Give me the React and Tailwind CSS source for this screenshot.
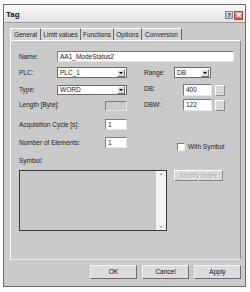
import React from "react";

const sunken =
  "border border-t-[#7c7c7c] border-l-[#7c7c7c] border-b-[#e6e6e6] border-r-[#e6e6e6]";

const TextBox = ({ value, className = "", disabled }) => (
  <div
    className={`${sunken} h-full flex items-center pl-[2px] ${
      disabled ? "bg-[#cbcbcb]" : "bg-white"
    } ${className}`}
  >
    {value}
  </div>
);

const Select = ({ value, className = "" }) => (
  <div
    className={`border border-[#6a6a6a] bg-white h-full flex items-center justify-between ${className}`}
  >
    <span className="pl-[2px]">{value}</span>
    <span className="w-[8px] h-[8px] mr-[1px] bg-[#dcdcdc] border border-t-white border-l-white border-b-[#777] border-r-[#777] flex items-center justify-center">
      <span className="block w-0 h-0 border-l-[2px] border-r-[2px] border-t-[2px] border-l-transparent border-r-transparent border-t-black" />
    </span>
  </div>
);

const DotsBtn = () => (
  <div className="ml-[3px] w-[10px] h-[11px] bg-[#d9d9d9] border border-t-white border-l-white border-b-[#8a8a8a] border-r-[#8a8a8a] flex items-end justify-center text-[#999] leading-[8px]">
    ...
  </div>
);

const Button = ({ label }) => (
  <div className="w-[47px] h-[14px] bg-[#dcdcdc] border border-t-[#f4f4f4] border-l-[#f4f4f4] border-b-[#6e6e6e] border-r-[#6e6e6e] flex items-center justify-center text-[#111]">
    {label}
  </div>
);

export default function App() {
  return (
    <div
      className="w-[250px] h-[292px] bg-white overflow-hidden text-[6.5px] text-[#222]"
      style={{ fontFamily: '"Liberation Sans", Arial, sans-serif' }}
    >
      <div className="ml-[3px] mt-[4px] w-[243px] h-[283px] border border-[#6c6c6c] flex flex-col">
        {/* title bar */}
        <div className="h-[18px] shrink-0 bg-gradient-to-b from-[#fbfbfb] to-[#e0e0e0] border-b border-[#9a9a9a] flex items-center justify-between pl-[2px] pr-[2px]">
          <span className="font-bold text-[8px] text-[#111] mt-[3px]">Tag</span>
          <div className="flex gap-[1px] mt-[3px]">
            <div className="w-[8px] h-[8px] bg-gradient-to-b from-[#dfe6f2] to-[#a9b6cc] border border-[#7585a0] flex items-center justify-center text-[6px] font-bold text-[#223] leading-none">
              ?
            </div>
            <div className="w-[9px] h-[9px] bg-gradient-to-b from-[#f4a6a0] to-[#d9534a] border border-[#a8433b] flex items-center justify-center">
              <svg width="6" height="6" viewBox="0 0 6 6">
                <path d="M1 1 L5 5 M5 1 L1 5" stroke="white" strokeWidth="1.3" />
              </svg>
            </div>
          </div>
        </div>

        {/* body */}
        <div className="flex-1 bg-[#cacaca] pt-[5px] pl-[6px] pr-[4px] flex flex-col">
          {/* tabs */}
          <div className="h-[12px] flex items-stretch">
            <div className="w-[31px] flex items-center justify-center border-t border-l border-white border-r border-r-[#666] bg-[#d4d4d4]">
              General
            </div>
            <div className="w-[40px] flex items-center justify-center border-t border-white border-r border-r-[#666] bg-[#d4d4d4]">
              Limit values
            </div>
            <div className="w-[33px] flex items-center justify-center border-t border-white border-r border-r-[#666] bg-[#d4d4d4]">
              Functions
            </div>
            <div className="w-[28px] flex items-center justify-center border-t border-white border-r border-r-[#666] bg-[#d4d4d4]">
              Options
            </div>
            <div className="w-[40px] flex items-center justify-center border-t border-white border-r border-r-[#666] bg-[#d4d4d4]">
              Conversion
            </div>
          </div>

          {/* panel */}
          <div className="h-[220px] border border-t-white border-l-white border-b-[#ececec] border-r-[#8f8f8f] pl-[8px] pt-[10px] flex flex-col">
            {/* Name */}
            <div className="h-[11px] flex items-center">
              <span className="w-[38px]">Name:</span>
              <TextBox value="AA1_ModeStatus2" className="w-[177px]" />
            </div>
            {/* PLC / Range */}
            <div className="h-[11px] mt-[5px] flex items-center">
              <span className="w-[38px]">PLC:</span>
              <Select value="PLC_1" className="w-[70px]" />
              <span className="w-[30px] ml-[17px]">Range:</span>
              <Select value="DB" className="w-[37px]" />
            </div>
            {/* Type / DB */}
            <div className="h-[12px] mt-[6px] flex items-center">
              <span className="w-[38px]">Type:</span>
              <div className="h-[10px] w-[70px]">
                <Select value="WORD" />
              </div>
              <span className="w-[39px] ml-[17px] self-start">DB:</span>
              <TextBox value="400" className="w-[29px]" />
              <DotsBtn />
            </div>
            {/* Length / DBW */}
            <div className="h-[12px] mt-[3px] flex items-end">
              <span className="w-[86px] mb-[1px]">Length [Byte]:</span>
              <div className="h-[10px] w-[22px]">
                <TextBox value="" disabled />
              </div>
              <span className="w-[39px] ml-[17px] self-center">DBW:</span>
              <TextBox value="122" className="w-[29px]" />
              <DotsBtn />
            </div>
            {/* Acquisition */}
            <div className="h-[11px] mt-[8px] flex items-center">
              <span className="w-[86px]">Acquisition Cycle [s]:</span>
              <TextBox value="1" className="w-[22px]" />
            </div>
            {/* Number of elements */}
            <div className="h-[11px] mt-[7px] flex items-center">
              <span className="w-[86px]">Number of Elements:</span>
              <TextBox value="1" className="w-[22px]" />
              <div className="ml-[50px] mt-[9px] flex items-center">
                <div className="w-[8px] h-[8px] bg-white border border-t-[#7c7c7c] border-l-[#7c7c7c] border-b-[#eee] border-r-[#eee]" />
                <span className="ml-[3px]">With Symbol</span>
              </div>
            </div>
            {/* Symbol label */}
            <div className="mt-[9px] h-[8px] flex items-center">Symbol:</div>
            {/* Symbol box + Modify index */}
            <div className="mt-[5px] flex items-start">
              <div className="w-[148px] h-[61px] border border-[#3a3a3a] bg-[#c8c8c8] flex justify-end">
                <div className="w-[10px] h-full bg-[#f3f3f3] flex flex-col justify-between items-center py-[2px]">
                  <span className="block w-0 h-0 border-l-[2px] border-r-[2px] border-b-[2px] border-l-transparent border-r-transparent border-b-[#aaa]" />
                  <span className="block w-0 h-0 border-l-[2px] border-r-[2px] border-t-[2px] border-l-transparent border-r-transparent border-t-[#aaa]" />
                </div>
              </div>
              <div className="ml-[7px] w-[49px] h-[11px] bg-[#d8d8d8] border border-t-white border-l-white border-b-[#8a8a8a] border-r-[#8a8a8a] flex items-center justify-center text-[#a4a4a4] [text-shadow:1px_1px_0_#ffffff]">
                Modify Index
              </div>
            </div>
          </div>

          {/* bottom buttons */}
          <div className="mt-[5px] flex justify-end gap-[5px]">
            <Button label="OK" />
            <Button label="Cancel" />
            <Button label="Apply" />
          </div>
        </div>
      </div>
    </div>
  );
}
